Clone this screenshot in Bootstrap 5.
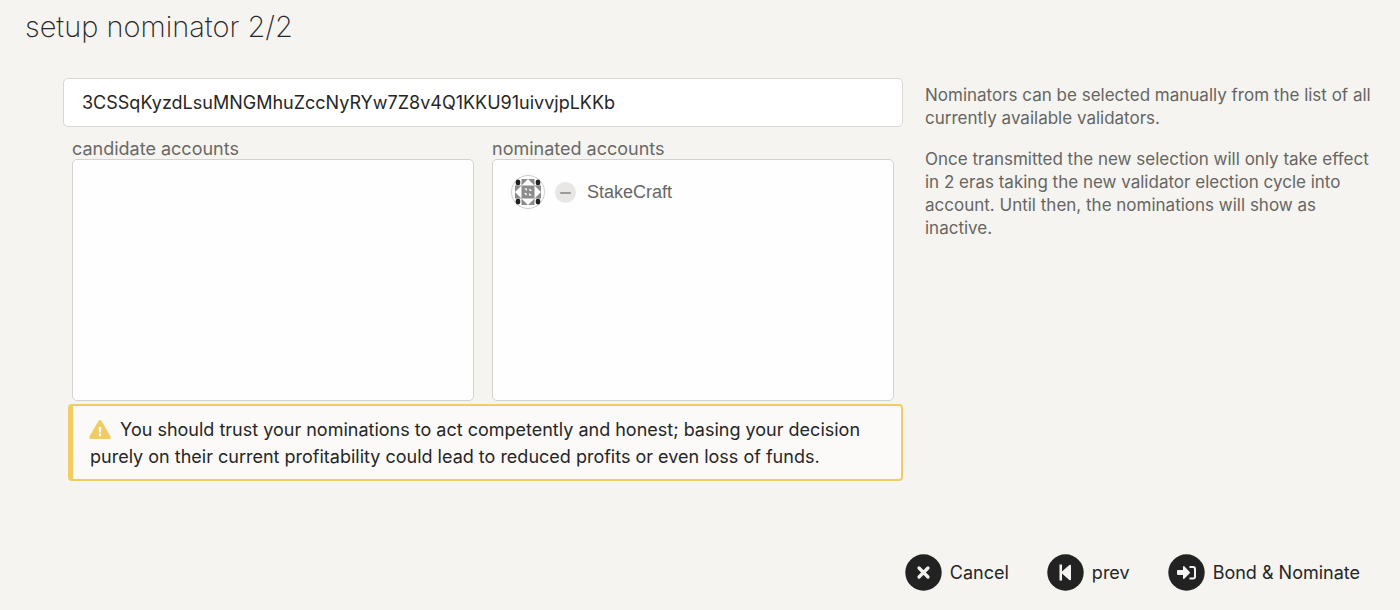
<!DOCTYPE html>
<html lang="en">
<head>
<meta charset="utf-8">
<meta name="viewport" content="width=device-width, initial-scale=1">
<title>setup nominator 2/2</title>
<link href="https://cdn.jsdelivr.net/npm/bootstrap@5.3.0/dist/css/bootstrap.min.css" rel="stylesheet">
<style>
  body { background: #f5f4f0; color: #262626; font-family: Inter, "Liberation Sans", sans-serif; font-size: 18px; line-height: 27px; }
  .wizard-title { font-size: 29px; font-weight: 200; line-height: 40px; padding: 7px 25px 0; color: #262626; }
  .wizard-body { display: grid; grid-template-columns: 840fr 453fr; gap: 22px; padding: 31px 22px 0 63px; }
  .stash { height: 49px; font-size: 18px; padding: 0 18px; border: 1px solid #d8d7d4; border-radius: 5px; color: #262626; background: #fff; }
  .lists { padding: 12px 9px 0; gap: 18px; }
  .list-label { line-height: 20px; color: #6a6967; }
  .account-list { height: 242px; border: 1px solid #d3d2cf; border-radius: 5px; background: #fefefe; padding: 15px 18px; }
  .account-name { font-family: "Liberation Sans", sans-serif; color: #666; margin-left: 11px; }
  .remove { width: 21px; height: 21px; background: #e8e7e5; margin-left: 10px; }
  .trust-note { margin: 3px 0 0 5px; background: #fbfaf9; border: 2px solid #f0cc62; border-left-width: 5px; border-radius: 4px; padding: 10px 17px 9px; }
  .trust-note svg { margin: -4px 4px 0 -1px; }
  .help { font-size: 17px; line-height: 23px; color: #666563; padding-top: 6px; }
  .help p { margin-bottom: 18px; }
  .wizard-actions { padding: 73px 40px 19px; gap: 38px; }
  .step-btn { background: none; border: 0; padding: 0; gap: 8px; color: #262626; }
</style>
</head>
<body>
<h1 class="wizard-title m-0">setup nominator 2/2</h1>
<main>
  <div class="wizard-body">
    <section>
      <input class="form-control stash" type="text" aria-label="stash account" value="3CSSqKyzdLsuMNGMhuZccNyRYw7Z8v4Q1KKU91uivvjpLKKb">
      <div class="lists d-flex">
        <div class="flex-fill w-50">
          <div class="list-label">candidate accounts</div>
          <div class="account-list"></div>
        </div>
        <div class="flex-fill w-50">
          <div class="list-label">nominated accounts</div>
          <div class="account-list">
            <div class="d-flex align-items-center">
              <svg width="34" height="34" viewBox="0 0 34 34" aria-hidden="true">
                <circle cx="17" cy="17" r="16.5" fill="#fefefe" stroke="#cfcfcf"/>
                <g fill="#222"><ellipse cx="7" cy="7.500" rx="2.300" ry="2.900"/><ellipse cx="27" cy="7.500" rx="2.300" ry="2.900"/><ellipse cx="7" cy="26.500" rx="2.300" ry="2.900"/><ellipse cx="27" cy="26.500" rx="2.300" ry="2.900"/></g>
                <g fill="#8c8c8c">
                  <path d="M10.500 4v6.500L17 4zM23.500 4v6.500L17 4zM10.500 30v-6.500L17 30zM23.500 30v-6.500L17 30zM4 10.500h6.500L4 17zM4 23.500h6.500L4 17zM30 10.500h-6.500L30 17zM30 23.500h-6.500L30 17z"/>
                  <path d="M10.500 10.500h13v13h-13z"/>
                </g>
                <path d="M13 13.500h3v2.500zM18.500 13v3h2.500zM15.500 21v-3h-2.500zM21 20.500h-3v-2.500z" fill="#fff"/>
              </svg>
              <button type="button" class="remove btn rounded-circle border-0 p-0 d-flex align-items-center justify-content-center" aria-label="remove StakeCraft">
                <svg width="11" height="3" aria-hidden="true"><rect width="11" height="2" y="1" rx="1" fill="#999"/></svg>
              </button>
              <span class="account-name">StakeCraft</span>
            </div>
          </div>
        </div>
      </div>
      <div class="trust-note" role="alert">
        <svg width="22" height="19" viewBox="0 0 576 512" aria-hidden="true"><path fill="#f0cc62" d="M570 440c18 32-5 72-42 72H48c-37 0-60-40-42-72L246 24c19-32 65-32 84 0z"/><path fill="#fff" d="M288 366a36 36 0 1 0 0 72 36 36 0 0 0 0-72zM254 190l8 145h52l8-145z"/></svg>
        You should trust your nominations to act competently and honest; basing your decision purely on their current profitability could lead to reduced profits or even loss of funds.
      </div>
    </section>
    <aside class="help">
      <p>Nominators can be selected manually from the list of all currently available validators.</p>
      <p>Once transmitted the new selection will only take effect in 2 eras taking the new validator election cycle into account. Until then, the nominations will show as inactive.</p>
    </aside>
  </div>
  <div class="wizard-actions d-flex justify-content-end">
    <button type="button" class="step-btn d-flex align-items-center">
      <svg width="37" height="37" viewBox="0 0 37 37" aria-hidden="true"><circle cx="18.500" cy="18.500" r="18.200" fill="#222"/><path d="M14 14l9 9M23 14l-9 9" stroke="#f5f3f1" stroke-width="3.200" stroke-linecap="round"/></svg>
      Cancel
    </button>
    <button type="button" class="step-btn d-flex align-items-center">
      <svg width="37" height="37" viewBox="0 0 37 37" aria-hidden="true"><circle cx="18.500" cy="18.500" r="18.200" fill="#222"/><path d="M12.500 10.500H15v7L22.300 11q1.700-1 1.700 1v13q0 2-1.700 1L15 19.500v7h-2.500z" fill="#f5f3f1"/></svg>
      prev
    </button>
    <button type="button" class="step-btn d-flex align-items-center">
      <svg width="37" height="37" viewBox="0 0 37 37" aria-hidden="true"><circle cx="18.500" cy="18.500" r="18.200" fill="#222"/><path d="M10 16h5v-3.200q.2-1.200 1.300-.5l5.400 5.600q.6.700 0 1.300l-5.400 5.600q-1.100.6-1.300-.5V21h-5q-1 0-1-1v-3q0-1 1-1z" fill="#f5f3f1"/><path d="M21.500 13h3.500q2 0 2 2v7.500q0 2-2 2h-3.500" fill="none" stroke="#f5f3f1" stroke-width="2"/></svg>
      Bond &amp; Nominate
    </button>
  </div>
</main>
<script src="https://cdn.jsdelivr.net/npm/bootstrap@5.3.0/dist/js/bootstrap.bundle.min.js"></script>
</body>
</html>
